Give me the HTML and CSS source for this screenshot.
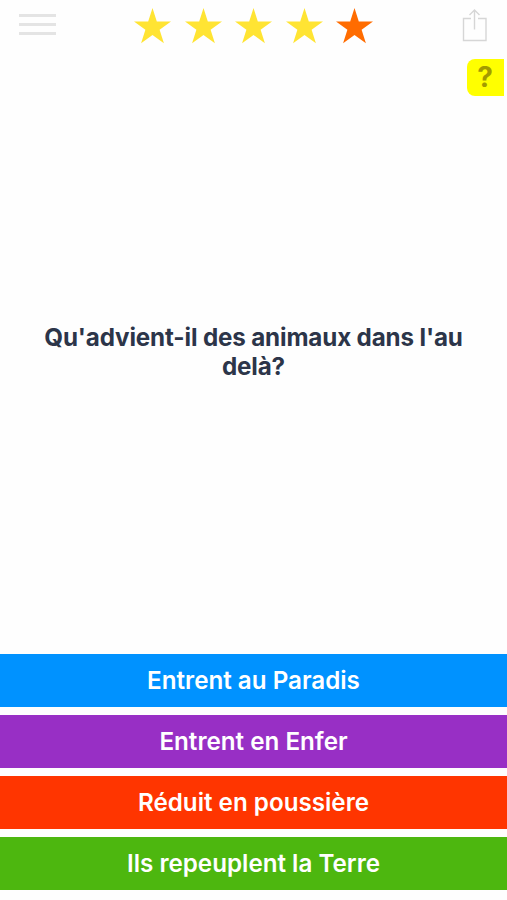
FILE: index.html
```html
<!DOCTYPE html>
<html lang="fr">
<head>
    <meta charset="UTF-8">
    <meta name="viewport" content="width=device-width, initial-scale=1.0">
    <title>Quiz</title>
    <link rel="stylesheet" href="styles.css">
</head>
<body>
    <svg width="0" height="0" class="defs">
        <symbol id="star" viewBox="0 0 37 36">
            <path d="M18.5 0 L22.8 13.4 H37 L25.6 21.7 L29.9 35.3 L18.5 27 L7.1 35.3 L11.4 21.7 L0 13.4 H14.2 Z"/>
        </symbol>
    </svg>
    <header>
        <button class="menu" aria-label="Menu">
            <span></span>
            <span></span>
            <span></span>
        </button>
        <div class="stars">
            <svg class="star"><use href="#star"/></svg>
            <svg class="star"><use href="#star"/></svg>
            <svg class="star"><use href="#star"/></svg>
            <svg class="star"><use href="#star"/></svg>
            <svg class="star active"><use href="#star"/></svg>
        </div>
        <button class="share" aria-label="Partager">
            <svg width="25" height="34" viewBox="0 0 25 34">
                <path d="M9 10.5 H1.5 V32.5 H24 V10.5 H16"/>
                <path d="M12.5 21.5 V2 M7.5 7 L12.5 2 L17.5 7"/>
            </svg>
        </button>
    </header>
    <button class="help">?</button>
    <main>
        <h1>Qu'advient-il des animaux dans l'au delà?</h1>
    </main>
    <div class="answers">
        <button class="answer blue">Entrent au Paradis</button>
        <button class="answer purple">Entrent en Enfer</button>
        <button class="answer red">Réduit en poussière</button>
        <button class="answer green">Ils repeuplent la Terre</button>
    </div>
</body>
</html>
```

FILE: styles.css
```css
* {
    margin: 0;
    padding: 0;
    box-sizing: border-box;
    font-family: 'Inter', sans-serif;
}
body {
    height: 900px;
    display: flex;
    flex-direction: column;
    background: #fefefe;
    overflow: hidden;
}
button {
    border: none;
    background: none;
    cursor: pointer;
}
.defs {
    display: none;
}
header {
    display: flex;
    align-items: flex-start;
    height: 59px;
    padding: 8px 20px 0 19px;
}
.menu {
    display: flex;
    flex-direction: column;
    gap: 6px;
    width: 37px;
    padding-top: 6px;
}
.menu span {
    height: 3px;
    background: #e4e4e4;
}
.stars {
    display: flex;
    gap: 13.5px;
    margin-left: 78px;
}
.star {
    width: 37px;
    height: 36px;
    fill: #ffe433;
}
.star.active {
    fill: #ff6c00;
}
.share {
    height: 34px;
    margin-left: auto;
}
.share svg {
    display: block;
    fill: none;
    stroke: #d6d6d6;
    stroke-width: 1.4;
}
.help {
    align-self: flex-end;
    width: 37px;
    height: 37px;
    margin-right: 3.5px;
    border-radius: 8px 0 0 8px;
    background: #ffff00;
    color: #a39b00;
    font-size: 28px;
    font-weight: 700;
    line-height: 35px;
}
main {
    flex: 1;
    display: flex;
    align-items: flex-start;
    justify-content: center;
    padding: 227px 30px 0;
}
h1 {
    color: #2c3549;
    font-size: 24.2px;
    font-weight: 650;
    letter-spacing: -0.15px;
    line-height: 29px;
    text-align: center;
}
.answers {
    display: flex;
    flex-direction: column;
    gap: 8px;
    padding-bottom: 10px;
}
.answer {
    height: 53px;
    color: #fff;
    font-size: 24.2px;
    font-weight: 600;
}
.blue {
    background: #0092ff;
}
.purple {
    background: #982fc5;
}
.red {
    background: #ff3500;
}
.green {
    background: #4db70f;
}
```
